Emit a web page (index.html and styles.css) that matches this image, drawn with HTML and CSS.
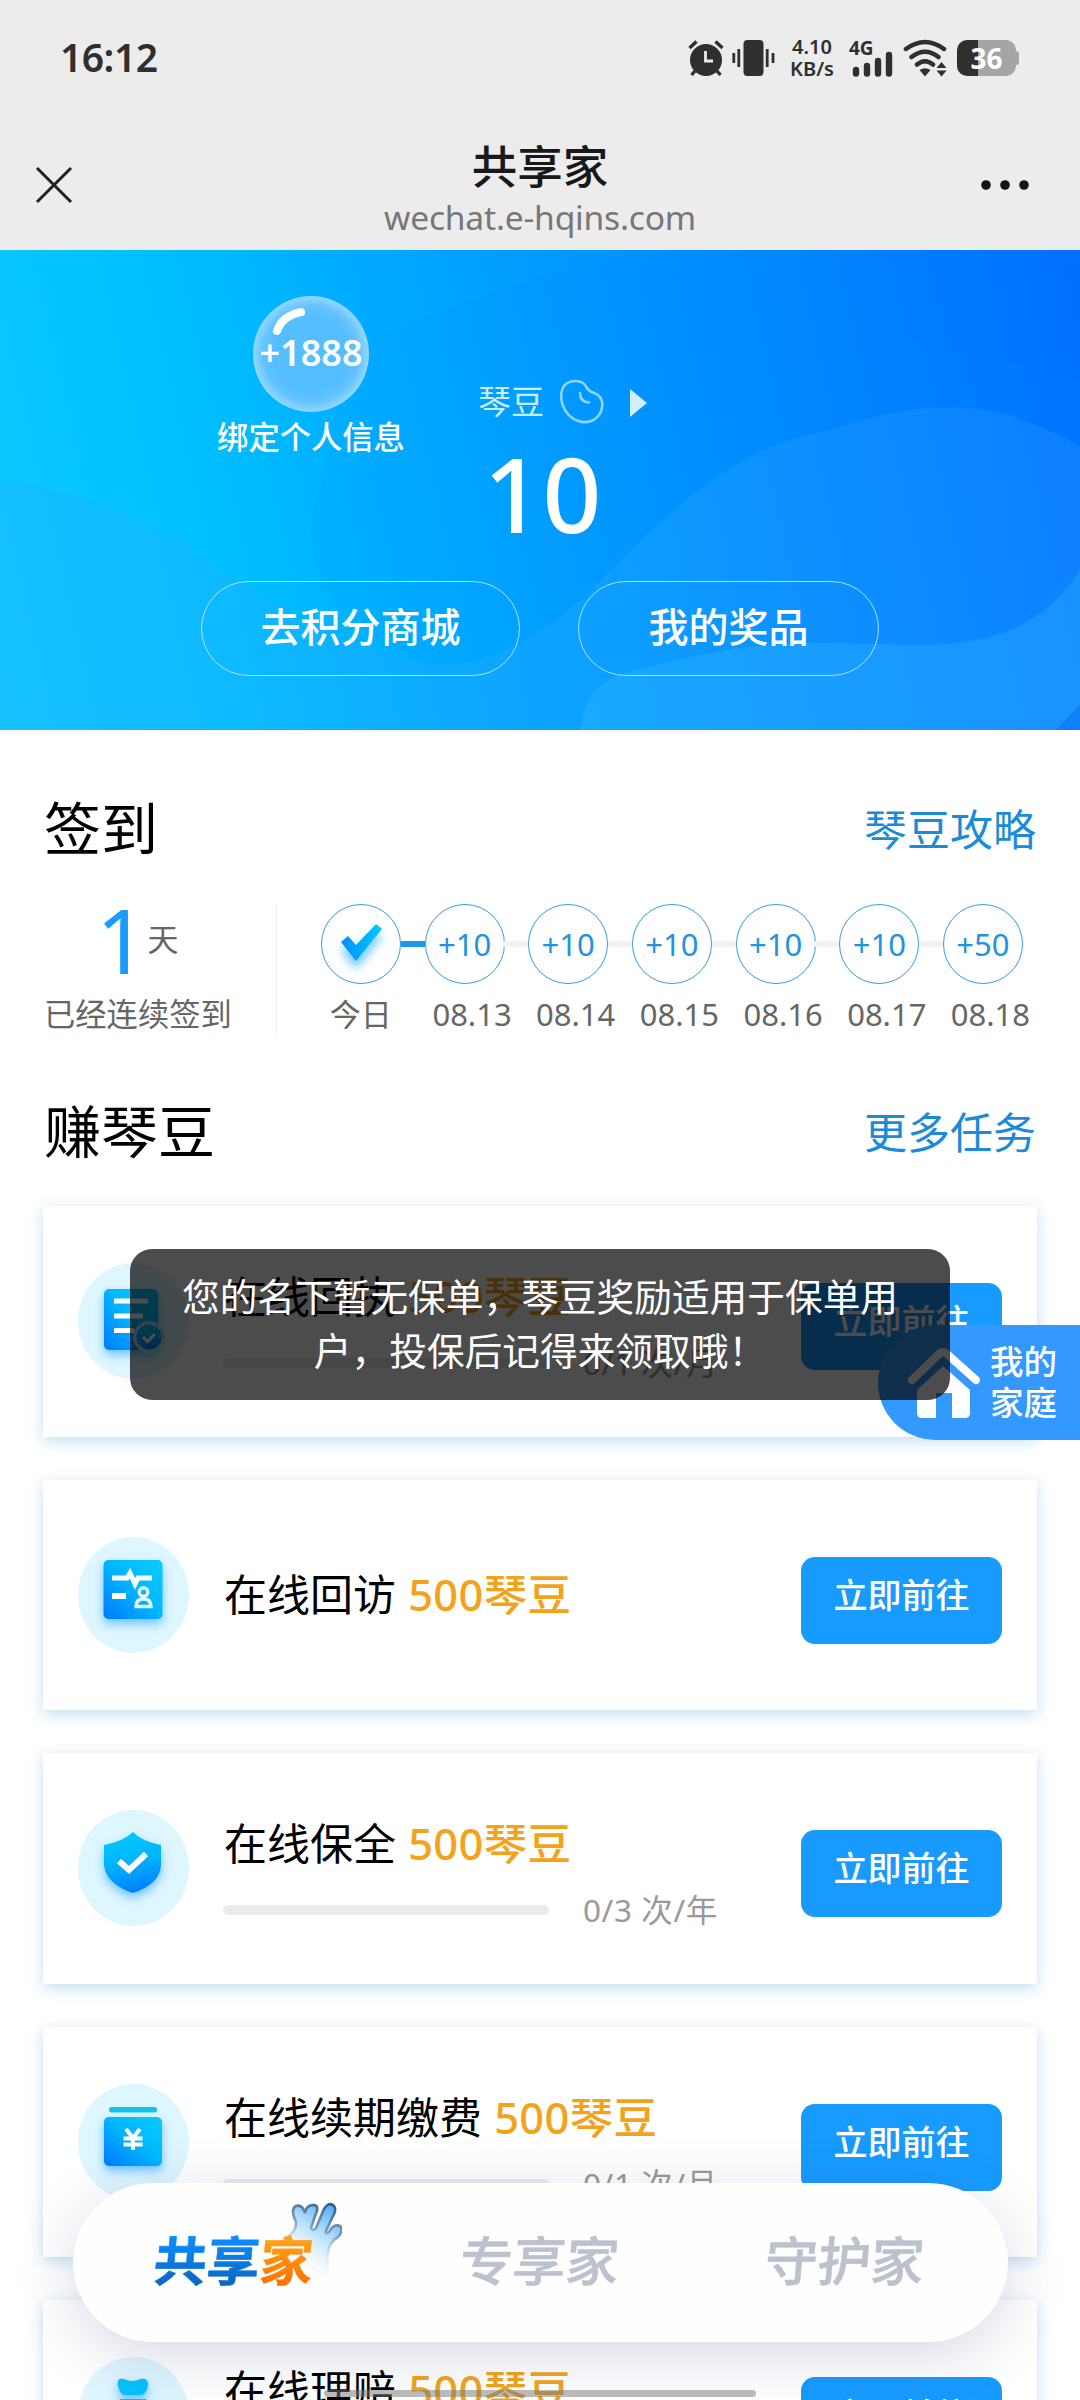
FILE: index.html
```html
<!DOCTYPE html>
<html lang="zh-CN">
<head>
<meta charset="utf-8">
<title>共享家</title>
<link rel="stylesheet" href="styles.css">
</head>
<body>
<svg class="defs" width="0" height="0" aria-hidden="true">
  <defs>
    <linearGradient id="ico" x1="0" y1="1" x2="0.9" y2="0.1">
      <stop offset="0" stop-color="#007aff"/><stop offset="0.6" stop-color="#00b8ff"/><stop offset="1" stop-color="#08c8fb"/>
    </linearGradient>
    <linearGradient id="icoDown" x1="0.3" y1="0" x2="0.5" y2="1">
      <stop offset="0" stop-color="#00c8ff"/><stop offset="0.5" stop-color="#00b4fc"/><stop offset="1" stop-color="#007dff"/>
    </linearGradient>
    <linearGradient id="hand" x1="0.9" y1="0" x2="0.4" y2="1">
      <stop offset="0" stop-color="#4ba9f5"/><stop offset="0.35" stop-color="#a5d8fb"/><stop offset="1" stop-color="#ffffff" stop-opacity="0"/>
    </linearGradient>
    <linearGradient id="handLine" x1="0.8" y1="0" x2="0.5" y2="1">
      <stop offset="0" stop-color="#2f6090"/><stop offset="0.35" stop-color="#7c9dbb"/><stop offset="0.7" stop-color="#dce9f4" stop-opacity="0.4"/><stop offset="1" stop-color="#fff" stop-opacity="0"/>
    </linearGradient>
  </defs>
</svg>

<div class="phone">
  <header class="top">
    <div class="status">
      <span class="clock">16:12</span>
      <div class="indicators">
        <svg class="alarm" width="38" height="38" viewBox="0 0 38 38">
          <circle cx="19" cy="21" r="16" fill="#2f2f2f"/>
          <path d="M2.500 9 L9.500 2.500 M35.500 9 L28.500 2.500 M8 32 L4.500 36 M30 32 L33.500 36" stroke="#2f2f2f" stroke-width="3.400"/>
          <path d="M18.500 12 V22 H26" stroke="#ececec" stroke-width="2.800" fill="none"/>
        </svg>
        <svg class="vibrate" width="43" height="38" viewBox="0 0 43 38">
          <rect x="11.500" y="1" width="20" height="36" rx="4" fill="#2f2f2f"/>
          <path d="M1.800 14 V24 M6.800 10 V28 M35.200 10 V28 M41 14 V24" stroke="#2f2f2f" stroke-width="2.800"/>
        </svg>
        <span class="speed"><b>4.10</b><b>KB/s</b></span>
        <span class="cell">
          <b>4G</b>
          <svg width="41" height="26" viewBox="0 0 41 26"><path d="M4 19 V22.500 M15 15 V22.500 M26 10 V22.500 M37 4 V22.500" stroke="#2f2f2f" stroke-width="6.400" stroke-linecap="round"/></svg>
        </span>
        <svg class="wifi" width="46" height="38" viewBox="0 0 46 38">
          <g fill="none" stroke="#2f2f2f" stroke-width="4.600" stroke-linecap="round">
            <path d="M3 10 Q22 -4 41 10"/><path d="M8.500 18 Q22 7.500 35.500 18"/><path d="M14 25.500 Q22 19 30 25.500"/>
          </g>
          <path d="M16.500 31 Q22 27.500 27.500 31 L22 37.500 Z M33.500 29 L38.500 23 L43.500 29 Z M33.500 31.500 L38.500 37.500 L43.500 31.500 Z" fill="#2f2f2f"/>
        </svg>
        <span class="battery"><b>36</b></span>
      </div>
    </div>
    <div class="navbar">
      <svg width="40" height="40" viewBox="0 0 40 40"><path d="M3 3 L37 37 M37 3 L3 37" stroke="#222" stroke-width="3"/></svg>
      <div class="site"><h1>共享家</h1><p>wechat.e-hqins.com</p></div>
      <svg width="50" height="12" viewBox="0 0 50 12" fill="#141414"><circle cx="6" cy="6" r="4.800"/><circle cx="25" cy="6" r="4.800"/><circle cx="44" cy="6" r="4.800"/></svg>
    </div>
  </header>

  <section class="hero">
    <svg class="waves" viewBox="0 0 1080 480" width="1080" height="480">
      <path d="M0 230 C80 238 130 270 180 290 C240 335 300 375 380 400 C410 412 430 416 460 414 C520 402 560 370 600 330 C680 250 740 195 830 180 C900 155 960 152 1010 165 C1050 180 1070 190 1080 196 V480 H0 Z" fill="#36a9ff" fill-opacity="0.240"/>
      <path d="M380 85 C480 50 550 12 640 12 C740 14 740 80 860 85 C960 90 1020 120 1080 130 V200 C1000 140 900 150 830 180 C740 195 680 250 600 330 C560 370 520 402 460 414 C380 415 280 330 320 240 C340 150 340 110 380 85 Z" fill="#0086ff" fill-opacity="0.080"/>
      <path d="M580 480 C590 420 620 425 700 405 C800 385 840 396 930 395 C1010 393 1050 365 1080 320 V480 Z" fill="#3fc0ff" fill-opacity="0.260"/>
      <path d="M1056 480 L1080 455 V480 Z" fill="#0b78f5" fill-opacity="0.700"/>
    </svg>
    <div class="gift">
      <div class="bubble">
        <svg width="116" height="116" viewBox="0 0 116 116"><path d="M24 35 Q29 20 48 16" fill="none" stroke="#fff" stroke-width="8" stroke-linecap="round"/></svg>
        <b>+1888</b>
      </div>
      <p>绑定个人信息</p>
    </div>
    <div class="beans">
      <span>琴豆</span>
      <svg width="46" height="46" viewBox="0 0 46 46" fill="none" stroke="#8fd4ff" stroke-width="2.600" stroke-linecap="round"><path d="M17 2 C23 2 26 5 28 9 C31 14 35 13 39 16 C46 22 44 34 36 40 C28 46 15 43 8 34 C2 26 0 15 5 7 C8 3 12 2 17 2 Z"/><path d="M21 14 Q21 23 30 23.500"/></svg>
      <svg width="18" height="28" viewBox="0 0 18 28"><path d="M0 0 L17 14 L0 28 Z" fill="#d3eeff"/></svg>
    </div>
    <div class="total">10</div>
    <div class="actions"><a class="mall">去积分商城</a><a class="prize">我的奖品</a></div>
  </section>

  <main>
    <div class="heading"><h2>签到</h2><a>琴豆攻略</a></div>
    <section class="checkin">
      <div class="streak"><p class="days"><b>1</b><span>天</span></p><p class="note">已经连续签到</p></div>
      <ol class="week">
        <li class="today"><i><svg width="60" height="66" viewBox="0 0 60 66">
          <defs><linearGradient id="tick" x1="0" y1="0" x2="1" y2="0"><stop offset="0" stop-color="#0090ff"/><stop offset="1" stop-color="#00c8ff"/></linearGradient></defs>
          <path d="M10 30 L17 24 L25 33 L45 12 L51 17 L25 49 Z" fill="url(#tick)"/></svg></i><span>今日</span></li>
        <li><i>+10</i><span>08.13</span></li>
        <li><i>+10</i><span>08.14</span></li>
        <li><i>+10</i><span>08.15</span></li>
        <li><i>+10</i><span>08.16</span></li>
        <li><i>+10</i><span>08.17</span></li>
        <li><i>+50</i><span>08.18</span></li>
      </ol>
    </section>
    <div class="heading tasks-heading"><h2>赚琴豆</h2><a>更多任务</a></div>
    <section class="tasks">
      <article class="task">
        <svg class="icon" viewBox="0 0 111 116"><g class="glow"><rect x="26" y="26" width="54" height="61" rx="5" fill="url(#ico)"/></g><path d="M36 38 H70 M36 53 H65 M36 67.500 H56" stroke="#fff" stroke-width="5"/><circle cx="71" cy="74" r="16" fill="#a3e5fb"/><circle cx="71" cy="74" r="12.500" fill="url(#icoDown)"/><path d="M65 74 L69.500 78.500 L77 71" stroke="#fff" stroke-width="3" fill="none"/></svg>
        <div class="info"><h3>在线回执 <em>500琴豆</em></h3><div class="progress"><i></i><span>0/1 次/月</span></div></div>
        <a class="go">立即前往</a>
      </article>
      <article class="task">
        <svg class="icon" viewBox="0 0 111 116"><g class="glow"><rect x="25.500" y="23" width="59" height="59" rx="5" fill="url(#ico)"/></g><path d="M34 41 H49 L52 36 L57 47 L60 41 H74" stroke="#fff" stroke-width="5" fill="none" stroke-linejoin="miter"/><path d="M34 59 H48" stroke="#fff" stroke-width="6"/><g fill="none" stroke="#e4faff" stroke-width="3.400"><circle cx="65.500" cy="55" r="4.300"/><path d="M58 69.500 Q58 62 65.500 62 Q73 62 73 69.500 Z"/></g></svg>
        <div class="info"><h3>在线回访 <em>500琴豆</em></h3></div>
        <a class="go">立即前往</a>
      </article>
      <article class="task">
        <svg class="icon" viewBox="0 0 111 116"><g class="glow"><path d="M55 22 Q63 31 83 35 V55 Q82 74 55 83 Q28 74 26 55 V35 Q46 31 55 22 Z" fill="url(#icoDown)"/></g><path d="M41 51 L51 60 L68 44" stroke="#fff" stroke-width="6" fill="none"/></svg>
        <div class="info"><h3>在线保全 <em>500琴豆</em></h3><div class="progress"><i></i><span>0/3 次/年</span></div></div>
        <a class="go">立即前往</a>
      </article>
      <article class="task">
        <svg class="icon" viewBox="0 0 111 116"><rect x="31" y="23" width="48" height="5.500" rx="2.500" fill="#12c3e8"/><g class="glow"><rect x="26" y="33" width="58" height="49" rx="5" fill="url(#ico)"/></g><path d="M48 45 L55 54 L62 45 M45.500 54.500 H64.500 M45.500 60.500 H64.500 M55 53 V66" stroke="#fff" stroke-width="4" fill="none"/></svg>
        <div class="info"><h3>在线续期缴费 <em>500琴豆</em></h3><div class="progress"><i></i><span>0/1 次/月</span></div></div>
        <a class="go">立即前往</a>
      </article>
      <article class="task">
        <svg class="icon" viewBox="0 0 111 116"><g class="glow"><path d="M40 29 Q38 20 46 22 Q54 26 62 22 Q71 20 70 29 Q68 38 62 38 H47 Q42 38 40 29 Z M42 42 H68 Q84 58 83 74 Q82 84 72 84 H38 Q28 84 27 74 Q27 58 42 42 Z" fill="#08c0fa"/></g></svg>
        <div class="info"><h3>在线理赔 <em>500琴豆</em></h3><div class="progress"><i></i><span>0/1 次/年</span></div></div>
        <a class="go">立即前往</a>
      </article>
    </section>
  </main>

  <aside class="family">
    <svg width="72" height="72" viewBox="0 0 72 72"><path d="M4 33 L31 7 Q35 3 39 7 L68 33" fill="none" stroke="#fff" stroke-width="8" stroke-linecap="round" stroke-linejoin="round"/><path d="M9 43 L35 19 L62 43 V66 Q62 71 57 71 H44 V46 H28 V71 H14 Q9 71 9 66 Z" fill="#fff"/></svg>
    <span>我的<br>家庭</span>
  </aside>

  <nav class="tabs">
    <a class="tab active">
      <svg class="hand" width="62" height="82" viewBox="0 0 62 82"><path d="M2 38 Q17 31 16 20 Q10 7 16 4 Q22 2 25 11 Q26 3 34 3 Q40 4 35 14 L31 26 Q33 30 36 26 L44 7 Q49 -1 54 4 Q57 8 52 16 L46 29 Q45 33 49 30 Q54 21 60 24 Q64 28 58 35 Q49 40 48 52 L48 77 Q30 60 2 64 Z" fill="url(#hand)" stroke="url(#handLine)" stroke-width="2.600"/></svg>
      <span><b>共享</b><b class="warm">家</b></span>
    </a>
    <a class="tab"><span>专享家</span></a>
    <a class="tab"><span>守护家</span></a>
  </nav>
  <div class="home-bar"></div>
  <div class="toast">您的名下暂无保单，琴豆奖励适用于保单用<br>户，投保后记得来领取哦！</div>
</div>
</body>
</html>
```
FILE: styles.css
```css
* { box-sizing: border-box; margin: 0; padding: 0; }
body { width: 1080px; height: 2400px; overflow: hidden; background: #fff; font-family: "Noto Sans", "Noto Sans CJK SC", sans-serif; color: #000; }
svg { display: block; flex: none; }
i, em { font-style: normal; }
.defs { position: absolute; }
.phone { position: relative; width: 1080px; height: 2400px; overflow: hidden; }

.top { height: 250px; background: #ececec; }
.status { height: 116px; display: flex; align-items: center; justify-content: space-between; padding: 0 60px 0 60px; }
.clock { font-size: 39px; font-weight: 600; color: #2f2f2f; letter-spacing: -0.5px; margin-top: -3px; }
.indicators { display: flex; align-items: center; color: #2f2f2f; }
.vibrate { margin-left: 7px; }
.speed { display: flex; flex-direction: column; width: 50px; margin-left: 12px; text-align: center; font-size: 20px; line-height: 22px; white-space: nowrap; }
.speed b { font-weight: 600; }
.cell { position: relative; display: flex; align-items: flex-end; width: 44px; height: 38px; margin-left: 12px; padding-left: 3px; }
.cell b { position: absolute; left: 0; top: -2px; font-size: 19px; line-height: 22px; font-weight: 700; }
.wifi { margin-left: 10px; }
.battery { position: relative; width: 59px; height: 36px; margin-left: 8px; margin-right: 4px; border-radius: 10px; background: linear-gradient(90deg, #2f2f2f 21px, #a5a5a5 21px); text-align: center; color: #fff; font-size: 28px; line-height: 36px; }
.battery::after { content: ""; position: absolute; right: -3px; top: 11px; width: 3px; height: 14px; border-radius: 0 3px 3px 0; background: #a5a5a5; }
.battery b { font-weight: 700; }
.navbar { height: 134px; display: flex; align-items: center; justify-content: space-between; padding: 4px 50px 0 34px; }
.site { flex: 1; text-align: center; padding: 9px 0 0 26px; }
.site h1 { font-size: 45.500px; line-height: 54px; font-weight: 500; color: #181818; }
.site p { font-size: 33.600px; line-height: 48px; color: #777; letter-spacing: -0.200px; }

.hero { position: relative; height: 480px; padding-top: 128px; background: linear-gradient(77deg, #0fcbff 0%, #00bfff 22%, #00a3ff 46%, #008bff 70%, #0070ff 100%); color: #fff; }
.waves { position: absolute; inset: 0; }
.hero > div { position: relative; }
.hero > .gift { position: absolute; left: 211px; top: 46px; width: 200px; display: flex; flex-direction: column; align-items: center; }
.bubble { position: relative; width: 116px; height: 116px; border-radius: 50%; background: radial-gradient(circle, #55beff 0 45%, #62c3ff 58%, #98d9ff 72%); display: flex; align-items: center; justify-content: center; }
.bubble svg { position: absolute; inset: 0; }
.bubble b { font-size: 36px; font-weight: 600; margin-top: -4px; }
.gift p { font-size: 31.300px; line-height: 48px; font-weight: 500; margin-top: 1px; white-space: nowrap; }
.beans { display: flex; align-items: center; height: 46px; padding-left: 478px; font-size: 33px; color: #c9ecff; }
.beans span { margin-top: -2px; }
.beans svg { margin-left: 15px; margin-top: 2px; }
.beans svg + svg { margin-left: 25px; margin-top: 4px; }
.total { height: 140px; line-height: 138px; text-align: center; font-size: 103px; font-weight: 500; padding-left: 5px; }
.actions { display: flex; gap: 58px; margin: 17px 0 0 201px; }
.actions a { height: 95px; border: 1.500px solid #a8e3ff; border-radius: 48px; text-align: center; font-size: 40px; line-height: 90px; font-weight: 500; }
.mall { width: 319px; }
.prize { width: 301px; }

.heading { display: flex; justify-content: space-between; align-items: center; height: 80px; margin-top: 60px; padding: 0 44px; }
.heading h2 { font-size: 57px; line-height: 80px; font-weight: 400; margin-top: -4px; }
.heading a { font-size: 43px; line-height: 80px; color: #1b8bd9; }
.checkin { display: flex; height: 130px; margin-top: 34px; padding-left: 44px; }
.streak { width: 233px; border-right: 1.500px solid #eee; }
.days { display: flex; height: 70px; padding-left: 52px; color: #666; font-size: 31px; line-height: 66px; align-items: center; }
.days b { font-size: 90px; font-weight: 400; color: #199bff; }
.note { font-size: 31.300px; line-height: 44px; margin-top: 18px; color: #666; white-space: nowrap; }
.week { display: flex; list-style: none; margin-left: 32px; }
.week li { position: relative; width: 103.700px; display: flex; flex-direction: column; align-items: center; color: #666; font-size: 31px; }
.week i { width: 80px; height: 80px; flex: none; border: 1.500px solid #369cdc; border-radius: 50%; background: #fff; color: #2293dd; line-height: 79px; text-align: center; font-size: 31px; display: flex; justify-content: center; }
.week li + li::before { content: ""; position: absolute; left: -12px; top: 37px; width: 24px; height: 6px; background: #f2f2f2; }
.week .today + li::before { background: #1f97ec; }
.week span { line-height: 44px; margin-top: 8px; padding-left: 15px; white-space: nowrap; }
.week .today span { padding-left: 0; }
.today svg { margin-top: 7px; filter: drop-shadow(0 8px 5px #6cc6ff); }
.tasks-heading { margin-top: 59px; }

.tasks { display: flex; flex-direction: column; gap: 43px; padding: 0 43px; margin-top: 33px; }
.task { height: 230.500px; display: flex; align-items: center; padding: 0 35px; background: #fff; box-shadow: 0 4px 14px rgba(30, 140, 210, 0.280); flex: none; }
.icon { width: 111px; height: 116px; border-radius: 50%; background: #def6ff; overflow: hidden; }
.glow { filter: drop-shadow(0 5px 5px rgba(0, 150, 255, 0.500)); }
.info { flex: 1; margin-left: 34px; }
.info h3 { font-size: 43px; line-height: 60px; font-weight: 400; white-space: nowrap; margin-top: 9px; padding-left: 1px; }
.info h3 em { color: #f2a31b; font-weight: 500; margin-left: 1px; font-size: 43.500px; letter-spacing: 0.300px; }
.info h3:only-child { margin-top: 0; }
.progress { display: flex; align-items: center; height: 44px; margin-top: 14px; }
.progress i { width: 326px; height: 10px; border-radius: 5px; background: #ebebed; }
.progress span { margin-left: 34px; margin-top: -4px; font-size: 31.500px; letter-spacing: 0.600px; color: #999; white-space: nowrap; }
.go { width: 201px; height: 87px; margin-top: 11px; border-radius: 14px; background: #179bff; color: #fff; text-align: center; font-size: 34px; line-height: 77px; font-weight: 500; }

.family { position: absolute; left: 878px; top: 1325px; width: 202px; height: 115px; border-radius: 58px 0 0 58px; background: #3399ff; display: flex; align-items: center; padding-left: 30px; color: #fff; font-size: 33.500px; line-height: 41px; font-weight: 500; }
.family span { margin-left: 10px; margin-top: -2px; white-space: nowrap; }
.toast { position: absolute; left: 130px; top: 1249px; width: 820px; height: 151px; border-radius: 22px; background: rgba(0, 0, 0, 0.700); color: #fff; font-size: 37.700px; line-height: 54px; padding-top: 21px; text-align: center; white-space: nowrap; }
.tabs { position: absolute; left: 73px; top: 2183px; width: 935px; height: 159px; border-radius: 80px; background: #fefefe; box-shadow: 0 14px 60px rgba(50, 70, 120, 0.200); display: flex; justify-content: space-between; align-items: center; padding: 0 84px 3px 81px; font-size: 53px; font-weight: 500; color: #bcc2cd; }
.tab { position: relative; }
.tab span { display: block; transform: skewX(-5deg); line-height: 80px; -webkit-text-stroke: 0.600px currentColor; }
.tab b { background: linear-gradient(#0a8cff 20%, #0d68c2 80%); background-clip: text; -webkit-background-clip: text; color: transparent; font-weight: 700; }
.tab .warm { background-image: linear-gradient(#ffa31a 20%, #ff7300 80%); }
.hand { position: absolute; left: 126px; top: -19px; }
.home-bar { position: absolute; left: 324px; top: 2390px; width: 432px; height: 7px; border-radius: 4px; background: rgba(120, 120, 120, 0.500); }
```
